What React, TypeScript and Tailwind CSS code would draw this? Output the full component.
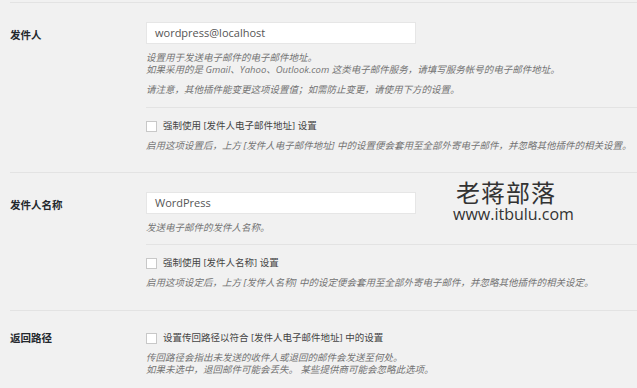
import React from "react";

const font = { fontFamily: '"Open Sans", "Noto Sans CJK SC", sans-serif' };

function Desc({ children, className = "" }: { children: React.ReactNode; className?: string }) {
  return <p className={"text-[9.5px] leading-[12px] italic text-[#737373] " + className}>{children}</p>;
}

function Check({ label, className = "" }: { label: string; className?: string }) {
  return (
    <label className={"flex items-center gap-[6px] " + className}>
      <span className="w-[11px] h-[11px] bg-white border border-[#c8c8c8] shrink-0" />
      <span className="text-[9.5px] leading-[12px] text-[#444]">{label}</span>
    </label>
  );
}

function Input({ value }: { value: string }) {
  return (
    <div className="w-[270px] h-[22px] bg-white border border-[#e6e6e6] flex items-center px-[8px] text-[11px] text-[#555]">
      {value}
    </div>
  );
}

function Row({ label, labelPt, children, className = "" }: { label: string; labelPt: string; children: React.ReactNode; className?: string }) {
  return (
    <div className={"flex border-t border-[#e3e3e3] " + className}>
      <div className={"w-[136px] shrink-0 text-[10.5px] font-bold text-[#23282d] " + labelPt}>{label}</div>
      <div className="flex-1">{children}</div>
    </div>
  );
}

export default function App() {
  return (
    <div className="relative w-[637px] h-[388px] bg-[#f1f1f1] overflow-hidden pl-[10px] pt-[2px]" style={font}>
      <Row label="发件人" labelPt="pt-[25px]" className="h-[170px]">
        <div className="pt-[19px]">
          <Input value="wordpress@localhost" />
          <Desc className="mt-[8px]">
            设置用于发送电子邮件的电子邮件地址。
            <br />
            如果采用的是 Gmail、Yahoo、Outlook.com 这类电子邮件服务，请填写服务帐号的电子邮件地址。
          </Desc>
          <Desc className="mt-[8px]">请注意，其他插件能变更这项设置值；如需防止变更，请使用下方的设置。</Desc>
          <div className="mt-[11px] border-t border-[#e3e3e3]" />
          <Check className="mt-[12px]" label="强制使用 [发件人电子邮件地址] 设置" />
          <Desc className="mt-[8px]">启用这项设置后，上方 [发件人电子邮件地址] 中的设置便会套用至全部外寄电子邮件，并忽略其他插件的相关设置。</Desc>
        </div>
      </Row>
      <Row label="发件人名称" labelPt="pt-[25px]" className="h-[138px]">
        <div className="pt-[19px]">
          <Input value="WordPress" />
          <Desc className="mt-[8px]">发送电子邮件的发件人名称。</Desc>
          <div className="mt-[10px] border-t border-[#e3e3e3]" />
          <Check className="mt-[12px]" label="强制使用 [发件人名称] 设置" />
          <Desc className="mt-[8px]">启用这项设定后，上方 [发件人名称] 中的设定便会套用至全部外寄电子邮件，并忽略其他插件的相关设定。</Desc>
        </div>
      </Row>
      <Row label="返回路径" labelPt="pt-[20px]" className="h-[80px]">
        <div className="pt-[21px]">
          <Check label="设置传回路径以符合 [发件人电子邮件地址] 中的设置" />
          <Desc className="mt-[8px]">
            传回路径会指出未发送的收件人或退回的邮件会发送至何处。
            <br />
            如果未选中，退回邮件可能会丢失。 某些提供商可能会忽略此选项。
          </Desc>
        </div>
      </Row>
      <div className="absolute left-[456px] top-[179px] flex flex-col items-start text-[#333]">
        <span className="text-[24px] leading-[26px] tracking-[1px]" style={{ fontFamily: '"Noto Sans CJK SC", sans-serif' }}>
          老蒋部落
        </span>
        <span className="text-[16px] leading-[18px] -ml-[3px]" style={{ fontFamily: '"Open Sans", sans-serif' }}>
          www.itbulu.com
        </span>
      </div>
    </div>
  );
}
